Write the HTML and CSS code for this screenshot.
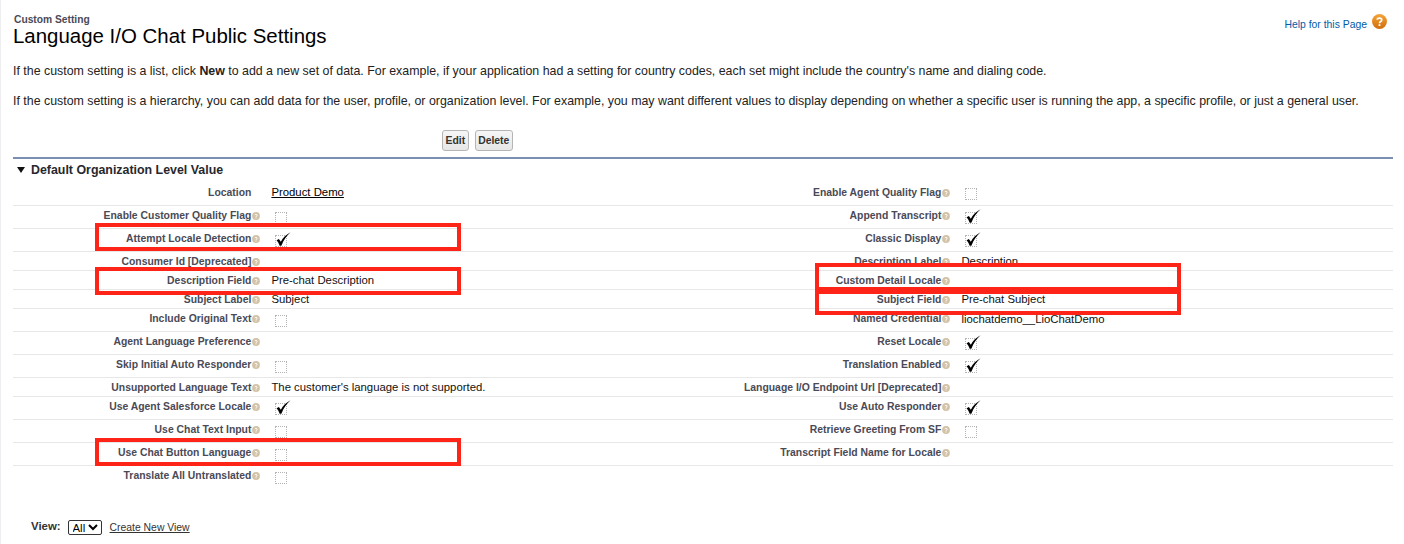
FILE: index.html
```html
<!DOCTYPE html>
<html lang="en">
<head>
<meta charset="utf-8">
<title>Language I/O Chat Public Settings</title>
<link rel="stylesheet" href="styles.css">
</head>
<body>
<svg class="sprites" width="0" height="0" aria-hidden="true">
  <symbol id="check" viewBox="0 0 14 13"><path d="M.5 7.6 L2.7 6.4 L4.5 9 C6.6 5.5 9.4 2.4 13.6 .3 C10 3.6 7.2 7.4 5 12.7 L3.4 12.7 C2.8 10.7 1.8 9 .5 7.6 Z" fill="#000"/></symbol>
  <symbol id="hint" viewBox="0 0 8 8"><circle cx="4" cy="4" r="3.9" fill="#d3c2a6"/><path d="M2.8 3.1 C2.9 2.2 5.2 2.1 5.2 3.2 C5.2 4 4 4 4 4.9" fill="none" stroke="#fff" stroke-width="1"/><rect x="3.5" y="5.4" width="1" height="1" fill="#fff"/></symbol>
</svg>
<header class="page-head">
  <div class="titles">
    <div class="kicker">Custom Setting</div>
    <h1 class="title">Language I/O Chat Public Settings</h1>
  </div>
  <a class="help" href="#"><span class="help-text">Help for this Page</span>
    <svg class="help-icon" width="15" height="15" viewBox="0 0 15 15"><defs><linearGradient id="hg" x1="0" y1="0" x2="0" y2="1"><stop offset="0" stop-color="#f5a43a"/><stop offset="1" stop-color="#d06d0c"/></linearGradient></defs><circle cx="7.5" cy="7.5" r="7.5" fill="url(#hg)"/><path d="M5.2 5.8 C5.3 3.6 9.8 3.5 9.8 5.9 C9.8 7.6 7.5 7.4 7.5 9.2" fill="none" stroke="#fff" stroke-width="1.6"/><rect x="6.6" y="10.2" width="1.8" height="1.8" fill="#fff"/></svg>
  </a>
</header>
<p class="intro">If the custom setting is a list, click <b>New</b> to add a new set of data. For example, if your application had a setting for country codes, each set might include the country's name and dialing code.</p>
<p class="intro intro-second">If the custom setting is a hierarchy, you can add data for the user, profile, or organization level. For example, you may want different values to display depending on whether a specific user is running the app, a specific profile, or just a general user.</p>
<div class="actions"><button class="btn">Edit</button><button class="btn">Delete</button></div>
<section class="section">
  <h2 class="section-title"><span class="twist"></span>Default Organization Level Value</h2>
  <table class="details">
    <tr class="tall first"><th>Location</th><td><a class="link" href="#">Product Demo</a></td><th>Enable Agent Quality Flag<svg class="hint"><use href="#hint"/></svg></th><td><span class="box"></span></td></tr>
    <tr class="tall"><th>Enable Customer Quality Flag<svg class="hint"><use href="#hint"/></svg></th><td><span class="box"></span></td><th>Append Transcript<svg class="hint"><use href="#hint"/></svg></th><td><span class="box"><svg class="tick"><use href="#check"/></svg></span></td></tr>
    <tr class="tall"><th>Attempt Locale Detection<svg class="hint"><use href="#hint"/></svg></th><td><span class="box"><svg class="tick"><use href="#check"/></svg></span></td><th>Classic Display<svg class="hint"><use href="#hint"/></svg></th><td><span class="box"><svg class="tick"><use href="#check"/></svg></span></td></tr>
    <tr><th>Consumer Id [Deprecated]<svg class="hint"><use href="#hint"/></svg></th><td></td><th>Description Label<svg class="hint"><use href="#hint"/></svg></th><td>Description</td></tr>
    <tr><th>Description Field<svg class="hint"><use href="#hint"/></svg></th><td>Pre-chat Description</td><th>Custom Detail Locale<svg class="hint"><use href="#hint"/></svg></th><td></td></tr>
    <tr><th>Subject Label<svg class="hint"><use href="#hint"/></svg></th><td>Subject</td><th>Subject Field<svg class="hint"><use href="#hint"/></svg></th><td>Pre-chat Subject</td></tr>
    <tr class="tall"><th>Include Original Text<svg class="hint"><use href="#hint"/></svg></th><td><span class="box"></span></td><th>Named Credential<svg class="hint"><use href="#hint"/></svg></th><td>liochatdemo__LioChatDemo</td></tr>
    <tr class="tall"><th>Agent Language Preference<svg class="hint"><use href="#hint"/></svg></th><td></td><th>Reset Locale<svg class="hint"><use href="#hint"/></svg></th><td><span class="box"><svg class="tick"><use href="#check"/></svg></span></td></tr>
    <tr class="tall"><th>Skip Initial Auto Responder<svg class="hint"><use href="#hint"/></svg></th><td><span class="box"></span></td><th>Translation Enabled<svg class="hint"><use href="#hint"/></svg></th><td><span class="box"><svg class="tick"><use href="#check"/></svg></span></td></tr>
    <tr><th>Unsupported Language Text<svg class="hint"><use href="#hint"/></svg></th><td>The customer's language is not supported.</td><th>Language I/O Endpoint Url [Deprecated]<svg class="hint"><use href="#hint"/></svg></th><td></td></tr>
    <tr class="tall"><th>Use Agent Salesforce Locale<svg class="hint"><use href="#hint"/></svg></th><td><span class="box"><svg class="tick"><use href="#check"/></svg></span></td><th>Use Auto Responder<svg class="hint"><use href="#hint"/></svg></th><td><span class="box"><svg class="tick"><use href="#check"/></svg></span></td></tr>
    <tr class="tall"><th>Use Chat Text Input<svg class="hint"><use href="#hint"/></svg></th><td><span class="box"></span></td><th>Retrieve Greeting From SF<svg class="hint"><use href="#hint"/></svg></th><td><span class="box"></span></td></tr>
    <tr class="tall"><th>Use Chat Button Language<svg class="hint"><use href="#hint"/></svg></th><td><span class="box"></span></td><th>Transcript Field Name for Locale<svg class="hint"><use href="#hint"/></svg></th><td></td></tr>
    <tr class="tall last"><th>Translate All Untranslated<svg class="hint"><use href="#hint"/></svg></th><td><span class="box"></span></td><th></th><td></td></tr>
  </table>
</section>
<footer class="view-bar">
  <label class="view-label" for="view">View:</label>
  <select class="view-select" id="view"><option>All</option></select>
  <a class="view-link" href="#">Create New View</a>
</footer>
<div class="mark mark-a"></div>
<div class="mark mark-b"></div>
<div class="mark mark-c"></div>
<div class="mark mark-d"></div>
<div class="mark mark-e"></div>
</body>
</html>
```
FILE: styles.css
```css
* { box-sizing: border-box; }
html, body { margin: 0; height: 544px; overflow: hidden; }
body {
  position: relative;
  background: #fff;
  border-left: 1px solid #eeeef0;
  padding: 0 11px 0 12px;
  font-family: "Liberation Sans", Arial, sans-serif;
  font-size: 12px;
  color: #000;
}
.sprites { position: absolute; }
.page-head { display: flex; justify-content: space-between; align-items: flex-start; padding-top: 14px; height: 56px; }
.kicker { margin-left: 1px; font-size: 10.25px; font-weight: bold; color: #4a4a56; line-height: 11px; }
.title { margin: -1px 0 0; font-size: 20.45px; font-weight: normal; line-height: 24px; }
.help { display: flex; align-items: flex-start; gap: 5px; margin: 0 6px 0 0; color: #015ba7; font-size: 10.4px; text-decoration: none; line-height: 15px; }
.help-text { margin-top: 3px; }
.help-icon { display: block; }
.intro { margin: 8px 0 0; font-size: 12.38px; line-height: 14px; color: #222; }
.intro-second { margin-top: 16px; }
.actions { display: flex; gap: 6px; justify-content: flex-start; margin: 22px 0 0 429px; height: 21px; }
.btn {
  height: 21px; padding: 0 2.5px; border: 1px solid #b5b5b5; border-radius: 3px;
  background: linear-gradient(#f6f6f6, #e6e6e6);
  font: bold 10.4px "Liberation Sans", Arial, sans-serif; color: #333;
}
.section { margin-top: 6px; border-top: 2px solid #7b8fb5; }
.section-title { display: flex; align-items: center; margin: 0 0 2px; height: 21px; padding-left: 4px; font-size: 12.4px; color: #27282e; }
.twist { width: 0; height: 0; margin-right: 6px; border-style: solid; border-width: 6px 4px 0; border-color: #111 transparent transparent; }
.details { width: 100%; border-collapse: collapse; table-layout: fixed; }
.details th, .details td { height: 19px; padding: 0 10px; border-bottom: 1px solid #e7e7e7; vertical-align: middle; }
.details th { padding-top: 2px; }
.details .tall th, .details .tall td { height: 23px; vertical-align: top; }
.details .tall th { padding-top: 3px; }
.details .first th { padding-top: 4px; }
.details .tall td { padding-top: 3px; }
.details .last th, .details .last td { border-bottom: 0; }
.details th { width: 18%; text-align: right; font-size: 10.4px; font-weight: bold; line-height: 14px; color: #4a4a56; white-space: nowrap; }
.details td { width: 32%; font-size: 11.35px; color: #111; line-height: 14px; }
.hint { width: 8px; height: 8px; margin: 0 -9px 0 1px; vertical-align: -1px; }
.link { color: #000; text-decoration: underline; }
.box { position: relative; display: block; width: 12px; height: 12px; margin: 3px 0 0 4px; border: 1px dotted #b4b4b4; }
.tick { position: absolute; left: 0; top: -4px; width: 15px; height: 14px; }
.view-bar { display: flex; align-items: center; margin-top: 30px; padding-left: 18px; height: 16px; }
.view-label { font-weight: bold; font-size: 11.4px; color: #333; margin-right: 7px; }
.view-select { width: 34px; height: 15px; margin: 3px 8px 0 0; padding: 0; border: 1px solid #333; border-radius: 2px; background: #fff; font: 11.35px "Liberation Sans", Arial, sans-serif; }
.view-link { margin-top: 3px; font-size: 10.4px; color: #333; }
.mark { position: absolute; width: 366px; border: 4px solid #ff2418; }
.mark-a { left: 94px; top: 223px; height: 28px; }
.mark-b { left: 94px; top: 267px; height: 28px; }
.mark-c { left: 94px; top: 438px; height: 28px; }
.mark-d { left: 814px; top: 263px; height: 28px; }
.mark-e { left: 814px; top: 290px; height: 25px; }
```
